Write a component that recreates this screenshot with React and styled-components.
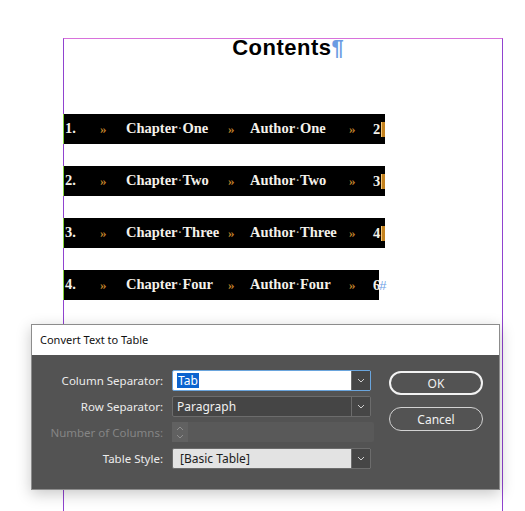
import React from 'react';
import styled, { createGlobalStyle, css } from 'styled-components';

const GlobalStyle = createGlobalStyle`
  html, body {
    margin: 0;
    padding: 0;
    background: #ffffff;
    overflow: hidden;
  }
`;

const Canvas = styled.div`
  position: relative;
  width: 525px;
  height: 511px;
  overflow: hidden;
  background: #ffffff;
`;

// ページ枠
const PageFrame = styled.div`
  margin: 38px 0 0 63px;
  width: 438px;
  height: 480px;
  border-top: 1px solid #d872dc;
  border-left: 1px solid #9043cf;
  border-right: 1px solid #9043cf;
`;

const Title = styled.h1`
  margin: 0;
  height: 20px;
  line-height: 18px;
  text-align: center;
  font-family: "Liberation Sans", Arial, sans-serif;
  font-weight: 700;
  font-size: 22px;
  letter-spacing: 0.5px;
  color: #000;
`;

const Pilcrow = styled.span`
  color: #6b9be2;
  font-weight: 700;
  letter-spacing: 0;
  margin-right: -10px;
`;

const RowList = styled.div`
  display: flex;
  flex-direction: column;
  align-items: flex-start;
  gap: 22px;
  margin-top: 55px;
`;

const TocRow = styled.div`
  display: inline-grid;
  grid-template-columns: 36px 26px 102px 22px 99px 24px auto;
  align-items: center;
  height: 30px;
  margin-left: -1px;
  border-left: 1px solid #86d43a;
  background: #000;
  font-family: "Liberation Serif", "Times New Roman", serif;
  font-weight: 700;
  font-size: 14.5px;
  color: #f4f1ea;
  white-space: nowrap;
`;

const Cell = styled.span`
  padding-left: ${p => p.$pad || 0}px;
  padding-bottom: 1px;
`;

const Tab = styled.span`
  color: #c7852b;
  font-size: 13px;
`;

const SpaceDot = styled.span`
  color: #b9b4aa;
  font-weight: 400;
`;

const PageNum = styled.span`
  display: inline-flex;
  align-items: center;
`;

const ParaMark = styled.span`
  display: inline-block;
  width: 4px;
  height: 15px;
  margin-left: 1px;
  background: linear-gradient(90deg, #f4c87a 0 1px, #c4821f 1px 4px);
`;

const StoryEnd = styled.span`
  font-family: "Liberation Sans", Arial, sans-serif;
  font-weight: 400;
  font-size: 13px;
  color: #6f9fe6;
  margin-left: -1px;
  margin-right: -7px;
`;

// ダイアログ
const Dialog = styled.div`
  position: absolute;
  left: 31px;
  top: 324px;
  width: 467px;
  border: 1px solid #8c8c8c;
  box-shadow: 0 4px 14px rgba(0, 0, 0, 0.22);
  font-family: "Noto Sans", "Open Sans", sans-serif;
`;

const TitleBar = styled.div`
  height: 30px;
  display: flex;
  align-items: center;
  padding: 0 0 2px 8px;
  box-sizing: border-box;
  background: #ffffff;
  font-size: 11px;
  color: #111;
`;

const DialogBody = styled.div`
  display: flex;
  align-items: flex-start;
  height: 134px;
  box-sizing: border-box;
  padding-top: 15px;
  background: #535353;
`;

const Form = styled.div`
  display: grid;
  grid-template-columns: 131px 199px;
  grid-auto-rows: 21px;
  column-gap: 9px;
  row-gap: 5px;
`;

const Label = styled.div`
  display: flex;
  align-items: center;
  justify-content: flex-end;
  font-size: 11.5px;
  color: ${p => (p.$disabled ? '#858585' : '#ececec')};
`;

const selectVariants = {
  focus: css`
    border-color: #6aa5dd;
    background: #ffffff;
    color: #111;
  `,
  dark: css`
    border-color: #6c6c6c;
    background: #454545;
    color: #f0f0f0;
  `,
  light: css`
    border-color: #6c6c6c;
    background: #e3e3e3;
    color: #1c1c1c;
  `,
};

const SelectBox = styled.div`
  display: flex;
  align-items: stretch;
  box-sizing: border-box;
  height: 21px;
  border: 1px solid;
  border-radius: 2px;
  font-size: 12px;
  ${p => selectVariants[p.$variant]}
`;

const SelectValue = styled.div`
  flex: 1;
  display: flex;
  align-items: center;
  padding-left: ${p => p.$pad || 4}px;
`;

const Selected = styled.span`
  background: #0c63cf;
  color: #ffffff;
  padding: 0 1px;
  line-height: 15px;
`;

const ArrowSeg = styled.div`
  width: 18px;
  display: flex;
  align-items: center;
  justify-content: center;
  background: #464646;
  border-left: 1px solid #6c6c6c;
`;

const SpinField = styled.div`
  display: flex;
  height: 20px;
  width: 202px;
  background: #595959;
  border-radius: 2px;
`;

const SpinBox = styled.div`
  width: 16px;
  display: flex;
  flex-direction: column;
  align-items: center;
  justify-content: center;
  gap: 3px;
  background: #616161;
`;

const ButtonColumn = styled.div`
  display: flex;
  flex-direction: column;
  gap: 12px;
  margin: 1px 0 0 18px;
`;

const PillButton = styled.button`
  width: 94px;
  height: 24px;
  box-sizing: border-box;
  border-radius: 12px;
  border: ${p => (p.$primary ? '2px solid #f2f2f2' : '1px solid #d2d2d2')};
  background: transparent;
  color: #f0f0f0;
  font-family: "Noto Sans", "Open Sans", sans-serif;
  font-size: 12px;
  padding: 0;
`;

const Chevron = ({ up, color = '#d0d0d0' }) => (
  <svg width="8" height="5" viewBox="0 0 8 5">
    <path
      d={up ? 'M1 4 L4 1 L7 4' : 'M1 1 L4 4 L7 1'}
      fill="none"
      stroke={color}
      strokeWidth="1"
    />
  </svg>
);

const tocData = [
  { num: '1.', chapter: 'One', author: 'One', page: '2', last: false },
  { num: '2.', chapter: 'Two', author: 'Two', page: '3', last: false },
  { num: '3.', chapter: 'Three', author: 'Three', page: '4', last: false },
  { num: '4.', chapter: 'Four', author: 'Four', page: '6', last: true },
];

const App = () => {
  return (
    <Canvas>
      <GlobalStyle />
      <PageFrame>
        <Title>
          Contents<Pilcrow>¶</Pilcrow>
        </Title>
        <RowList>
          {tocData.map(row => (
            <TocRow key={row.num}>
              <Cell $pad={1}>{row.num}</Cell>
              <Tab>»</Tab>
              <Cell>
                Chapter<SpaceDot>·</SpaceDot>{row.chapter}
              </Cell>
              <Tab>»</Tab>
              <Cell>
                Author<SpaceDot>·</SpaceDot>{row.author}
              </Cell>
              <Tab>»</Tab>
              <PageNum>
                {row.page}
                {row.last ? <StoryEnd>#</StoryEnd> : <ParaMark />}
              </PageNum>
            </TocRow>
          ))}
        </RowList>
      </PageFrame>

      <Dialog>
        <TitleBar>Convert Text to Table</TitleBar>
        <DialogBody>
          <Form>
            <Label>Column Separator:</Label>
            <SelectBox $variant="focus">
              <SelectValue>
                <Selected>Tab</Selected>
              </SelectValue>
              <ArrowSeg>
                <Chevron />
              </ArrowSeg>
            </SelectBox>

            <Label>Row Separator:</Label>
            <SelectBox $variant="dark">
              <SelectValue>Paragraph</SelectValue>
              <ArrowSeg>
                <Chevron />
              </ArrowSeg>
            </SelectBox>

            <Label $disabled>Number of Columns:</Label>
            <SpinField>
              <SpinBox>
                <Chevron up color="#8e8e8e" />
                <Chevron color="#8e8e8e" />
              </SpinBox>
            </SpinField>

            <Label>Table Style:</Label>
            <SelectBox $variant="light">
              <SelectValue $pad={7}>[Basic Table]</SelectValue>
              <ArrowSeg>
                <Chevron />
              </ArrowSeg>
            </SelectBox>
          </Form>
          <ButtonColumn>
            <PillButton $primary>OK</PillButton>
            <PillButton>Cancel</PillButton>
          </ButtonColumn>
        </DialogBody>
      </Dialog>
    </Canvas>
  );
};

export default App;
